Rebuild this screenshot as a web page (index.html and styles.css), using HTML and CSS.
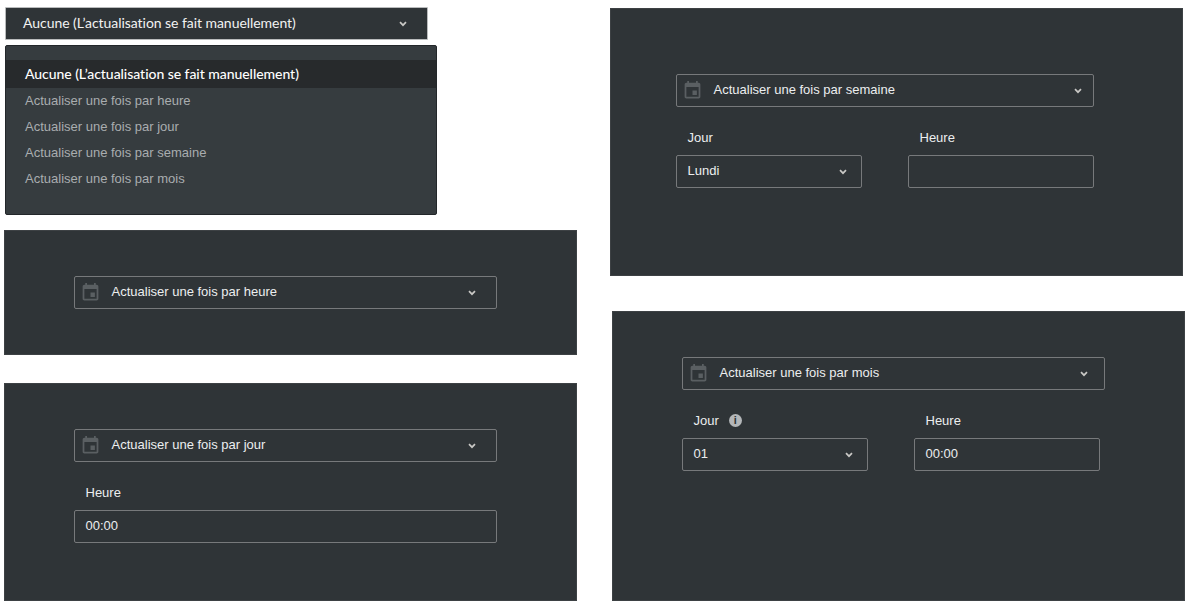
FILE: index.html
```html
<!DOCTYPE html>
<html lang="fr">
<head>
    <meta charset="UTF-8">
    <meta name="viewport" content="width=device-width, initial-scale=1.0">
    <title>Actualisation</title>
    <link rel="stylesheet" href="styles.css">
</head>
<body>
    <svg class="sprites" width="0" height="0" aria-hidden="true">
        <symbol id="icon-event" viewBox="0 0 24 24">
            <path d="M17 12h-5v5h5v-5zM16 1v2H8V1H6v2H5c-1.11 0-1.99.9-1.99 2L3 19c0 1.1.89 2 2 2h14c1.1 0 2-.9 2-2V5c0-1.1-.9-2-2-2h-1V1h-2zm3 18H5V8h14v11z"/>
        </symbol>
        <symbol id="icon-chevron" viewBox="0 0 8 6">
            <path d="M1 1.2 4 4.2 7 1.2" fill="none" stroke="currentColor" stroke-width="1.7"/>
        </symbol>
    </svg>

    <div class="sheet">
        <div class="col col-left">
            <!-- Dropdown opened -->
            <div class="top-select">
                <span>Aucune (L’actualisation se fait manuellement)</span>
                <svg class="chevron chevron-top"><use href="#icon-chevron"/></svg>
            </div>
            <ul class="menu">
                <li class="menu-item selected">Aucune (L’actualisation se fait manuellement)</li>
                <li class="menu-item">Actualiser une fois par heure</li>
                <li class="menu-item">Actualiser une fois par jour</li>
                <li class="menu-item">Actualiser une fois par semaine</li>
                <li class="menu-item">Actualiser une fois par mois</li>
            </ul>

            <!-- Hourly -->
            <section class="panel panel-hour">
                <div class="field field-select">
                    <svg class="cal"><use href="#icon-event"/></svg>
                    <span class="field-text">Actualiser une fois par heure</span>
                    <svg class="chevron"><use href="#icon-chevron"/></svg>
                </div>
            </section>

            <!-- Daily -->
            <section class="panel panel-day">
                <div class="field field-select">
                    <svg class="cal"><use href="#icon-event"/></svg>
                    <span class="field-text">Actualiser une fois par jour</span>
                    <svg class="chevron"><use href="#icon-chevron"/></svg>
                </div>
                <div class="label">Heure</div>
                <div class="field"><span class="value">00:00</span></div>
            </section>
        </div>

        <div class="col col-right">
            <!-- Weekly -->
            <section class="panel panel-week">
                <div class="field field-select">
                    <svg class="cal"><use href="#icon-event"/></svg>
                    <span class="field-text">Actualiser une fois par semaine</span>
                    <svg class="chevron chevron-far"><use href="#icon-chevron"/></svg>
                </div>
                <div class="pair">
                    <div>
                        <div class="label">Jour</div>
                        <div class="field field-small">
                            <span class="value">Lundi</span>
                            <svg class="chevron"><use href="#icon-chevron"/></svg>
                        </div>
                    </div>
                    <div>
                        <div class="label">Heure</div>
                        <div class="field"></div>
                    </div>
                </div>
            </section>

            <!-- Monthly -->
            <section class="panel panel-month">
                <div class="field field-select">
                    <svg class="cal"><use href="#icon-event"/></svg>
                    <span class="field-text">Actualiser une fois par mois</span>
                    <svg class="chevron"><use href="#icon-chevron"/></svg>
                </div>
                <div class="pair">
                    <div>
                        <div class="label">Jour
                            <span class="info">i</span>
                        </div>
                        <div class="field field-small">
                            <span class="value">01</span>
                            <svg class="chevron"><use href="#icon-chevron"/></svg>
                        </div>
                    </div>
                    <div>
                        <div class="label">Heure</div>
                        <div class="field"><span class="value">00:00</span></div>
                    </div>
                </div>
            </section>
        </div>
    </div>
</body>
</html>
```

FILE: styles.css
```css
body {
    margin: 0;
    background-color: #fff;
    font-family: "Liberation Sans", Arial, sans-serif;
    font-size: 13px;
    color: #eceeef;
}

.sprites {
    display: block;
    height: 0;
}

.sheet {
    display: flex;
    align-items: flex-start;
}

.col-left {
    width: 573px;
    margin-left: 4px;
    padding-top: 7px;
}

.col-right {
    width: 575px;
    margin-left: 33px;
    padding-top: 8px;
}

/* Top select + opened menu */
.top-select {
    box-sizing: border-box;
    display: flex;
    align-items: center;
    justify-content: space-between;
    width: 423px;
    height: 33px;
    margin-left: 1px;
    padding: 0 20px 3px 17px;
    background-color: #2f3437;
    border: 1px solid #b9bbbc;
    border-radius: 1px;
    font-family: Lato, sans-serif;
    font-size: 14px;
    letter-spacing: -0.05px;
    color: #f2f2f2;
}

.menu {
    box-sizing: border-box;
    list-style: none;
    width: 432px;
    height: 170px;
    margin: 5px 0 0 1px;
    padding: 14px 0 0;
    background-color: #363c3f;
    border: 1px solid #23272a;
    border-radius: 2px;
}

.menu-item {
    height: 26px;
    line-height: 25px;
    padding-left: 19px;
    color: #a9adaf;
}

.menu-item.selected {
    height: 28px;
    line-height: 27px;
    background-color: #272a2c;
    font-family: Lato, sans-serif;
    font-size: 14px;
    font-weight: 500;
    letter-spacing: -0.05px;
    color: #fff;
}

/* Dark panels */
.panel {
    box-sizing: border-box;
    background-color: #2f3437;
    border: 1px solid #3d4144;
}

.panel-hour {
    height: 125px;
    margin-top: 15px;
    padding: 45px 79px 0 69px;
}

.panel-day {
    height: 218px;
    margin-top: 28px;
    padding: 45px 79px 0 69px;
}

.panel-week {
    width: 573px;
    height: 268px;
    padding: 65px 88px 0 65px;
}

.panel-month {
    width: 573px;
    height: 290px;
    margin-top: 35px;
    margin-left: 2px;
    padding: 45px 79px 0 69px;
}

.panel-month .field-select {
    padding-right: 16px;
}

.panel-month .pair {
    width: 418px;
}

.field {
    box-sizing: border-box;
    display: flex;
    align-items: center;
    height: 33px;
    padding: 0 11px 0 10.5px;
    border: 1px solid #77797b;
    border-radius: 2px;
}

.field-select {
    padding: 0 20px 0 4.5px;
}

.field-small {
    justify-content: space-between;
    padding-right: 14px;
}

.field-text {
    flex: 1;
    margin-left: 11px;
    margin-top: -3px;
}

.value {
    margin-top: -3px;
}

.label {
    display: flex;
    align-items: center;
    gap: 5px;
    height: 17px;
    margin: 22px 0 9px;
    padding-left: 11.5px;
}

.pair {
    display: grid;
    grid-template-columns: 186px 186px;
    column-gap: 46px;
}

.cal {
    width: 21px;
    height: 21px;
    fill: #5a5f62;
    flex: none;
}

.chevron {
    width: 8px;
    height: 6px;
    color: #c9c8c5;
    flex: none;
}

.chevron-top {
    margin-top: 3px;
}

.chevron-far {
    margin-right: -9px;
}

.info {
    display: inline-block;
    width: 13px;
    height: 13px;
    margin-left: 5px;
    border-radius: 50%;
    background-color: #b4b7b9;
    font-size: 11px;
    font-weight: bold;
    line-height: 13px;
    text-align: center;
    color: #2f3437;
}
```
